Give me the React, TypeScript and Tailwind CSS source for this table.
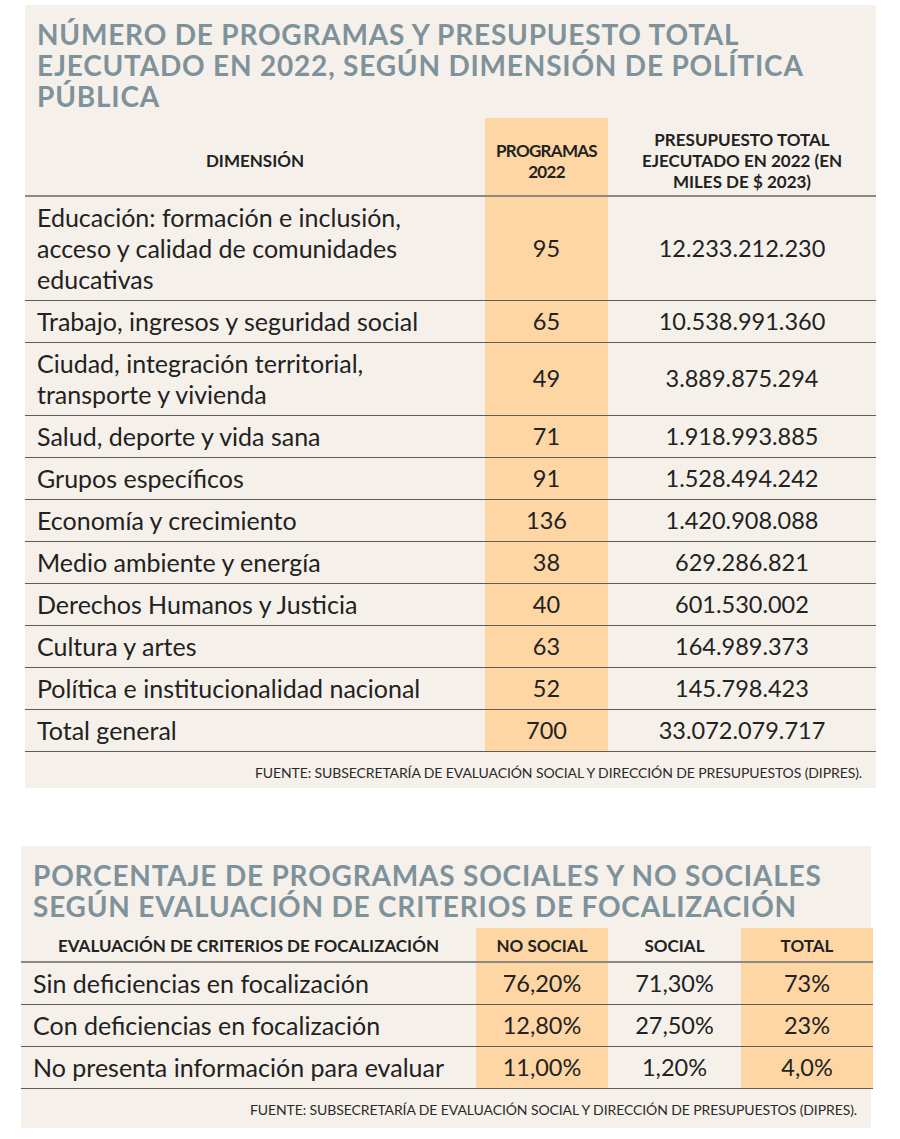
import React from "react";

const font = { fontFamily: "Lato, 'Noto Sans', sans-serif" };

const dims = [
  { name: ["Educación: formación e inclusión,", "acceso y calidad de comunidades", "educativas"], n: "95", total: "12.233.212.230" },
  { name: ["Trabajo, ingresos y seguridad social"], n: "65", total: "10.538.991.360" },
  { name: ["Ciudad, integración territorial,", "transporte y vivienda"], n: "49", total: "3.889.875.294" },
  { name: ["Salud, deporte y vida sana"], n: "71", total: "1.918.993.885" },
  { name: ["Grupos específicos"], n: "91", total: "1.528.494.242" },
  { name: ["Economía y crecimiento"], n: "136", total: "1.420.908.088" },
  { name: ["Medio ambiente y energía"], n: "38", total: "629.286.821" },
  { name: ["Derechos Humanos y Justicia"], n: "40", total: "601.530.002" },
  { name: ["Cultura y artes"], n: "63", total: "164.989.373" },
  { name: ["Política e institucionalidad nacional"], n: "52", total: "145.798.423" },
  { name: ["Total general"], n: "700", total: "33.072.079.717" },
];

const focal = [
  { name: "Sin deficiencias en focalización", a: "76,20%", b: "71,30%", c: "73%" },
  { name: "Con deficiencias en focalización", a: "12,80%", b: "27,50%", c: "23%" },
  { name: "No presenta información para evaluar", a: "11,00%", b: "1,20%", c: "4,0%" },
];

const Fuente = () => (
  <p className="text-right text-[14px] tracking-[-0.1px] text-[#2a2a2a] uppercase leading-[14px]">
    Fuente: Subsecretaría de Evaluación Social y Dirección de Presupuestos (DIPRES).
  </p>
);

export default function App() {
  return (
    <div className="min-h-screen bg-white text-[#222]" style={font}>
      {/* Tabla 1 */}
      <section className="ml-[25px] mt-[5px] w-[851px] bg-[#f5f0ea]">
        <h2 className="px-3 pt-[14px] text-[28px] font-bold leading-[31px] text-[#7e929b] tracking-[0.8px]">
          NÚMERO DE PROGRAMAS Y PRESUPUESTO TOTAL<br />
          EJECUTADO EN 2022, SEGÚN DIMENSIÓN DE POLÍTICA<br />
          PÚBLICA
        </h2>
        <div className="mt-[6px] grid grid-cols-[460px_123px_1fr]">
          <div className="flex h-[79px] items-center justify-center border-b-2 border-[#8c8984] pt-2 text-[17px] font-bold">
            DIMENSIÓN
          </div>
          <div className="flex h-[79px] items-center justify-center border-b-2 border-[#8c8984] bg-[#fdd6a4] pt-2 text-center text-[17px] font-bold leading-[21px] tracking-[-0.7px]">
            PROGRAMAS<br />2022
          </div>
          <div className="flex h-[79px] items-center justify-center border-b-2 border-[#8c8984] pt-2 text-center text-[17px] font-bold leading-[21px]">
            PRESUPUESTO TOTAL<br />EJECUTADO EN 2022 (EN<br />MILES DE $ 2023)
          </div>
          {dims.map((d) => (
            <React.Fragment key={d.n}>
              <div className="border-b border-[#5e5e5e] px-3 py-[5px] text-[25px] leading-[31px]">
                {d.name.map((l) => (
                  <div key={l}>{l}</div>
                ))}
              </div>
              <div className="flex items-center justify-center border-b border-[#5e5e5e] bg-[#fdd6a4] text-[23.5px]">
                {d.n}
              </div>
              <div className="flex items-center justify-center border-b border-[#5e5e5e] text-[23.5px]">
                {d.total}
              </div>
            </React.Fragment>
          ))}
        </div>
        <div className="px-[14px] pt-[14px] pb-[8px]">
          <Fuente />
        </div>
      </section>

      {/* Tabla 2 */}
      <section className="ml-[21px] mt-[58px] w-[850px] bg-[#f5f0ea]">
        <h2 className="px-3 pt-[14px] text-[28px] font-bold leading-[31px] text-[#7e929b] tracking-[0.8px]">
          PORCENTAJE DE PROGRAMAS SOCIALES Y NO SOCIALES<br />
          SEGÚN EVALUACIÓN DE CRITERIOS DE FOCALIZACIÓN
        </h2>
        <div className="mt-[6px] grid w-[852px] grid-cols-[455px_132px_133px_132px]">
          {[
            { t: "EVALUACIÓN DE CRITERIOS DE FOCALIZACIÓN", o: false },
            { t: "NO SOCIAL", o: true },
            { t: "SOCIAL", o: false },
            { t: "TOTAL", o: true },
          ].map((h) => (
            <div
              key={h.t}
              className={`flex h-[35px] items-center justify-center border-b-2 border-[#8c8984] pt-[2px] text-[17px] font-bold ${h.o ? "bg-[#fdd6a4]" : ""}`}
            >
              {h.t}
            </div>
          ))}
          {focal.map((r) => (
            <React.Fragment key={r.name}>
              <div className="border-b border-[#5e5e5e] px-3 py-[5px] text-[25px] leading-[31px]">{r.name}</div>
              <div className="flex items-center justify-center border-b border-[#5e5e5e] bg-[#fdd6a4] text-[23.5px]">{r.a}</div>
              <div className="flex items-center justify-center border-b border-[#5e5e5e] text-[23.5px]">{r.b}</div>
              <div className="flex items-center justify-center border-b border-[#5e5e5e] bg-[#fdd6a4] text-[23.5px]">{r.c}</div>
            </React.Fragment>
          ))}
        </div>
        <div className="px-[14px] pt-[14px] pb-[11px]">
          <Fuente />
        </div>
      </section>
    </div>
  );
}
